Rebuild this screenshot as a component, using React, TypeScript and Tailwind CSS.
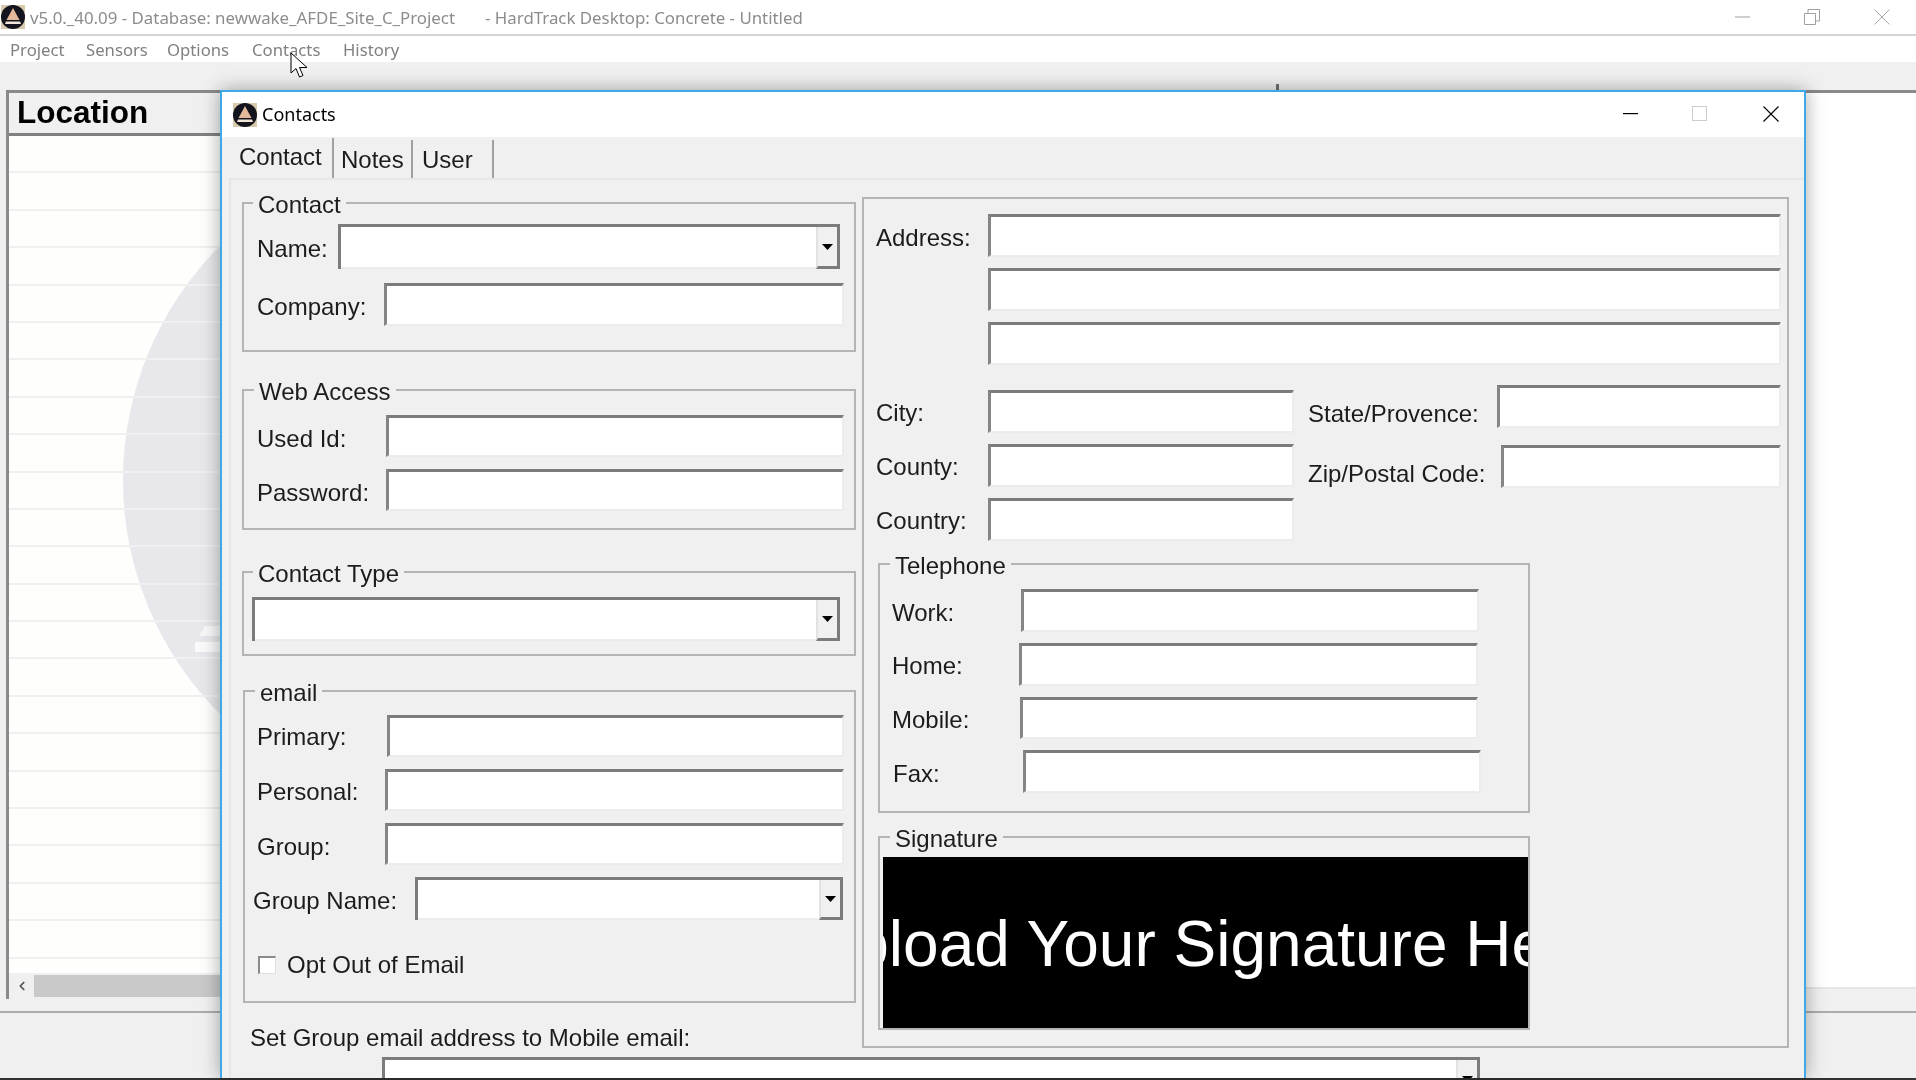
import type { ReactNode } from "react";
import { ChevronLeft } from "lucide-react";

const inputBevel =
  "bg-white border-t-[3px] border-l-[3px] border-r-[2px] border-b-[2px] border-t-[#7c7c7c] border-l-[#858585] border-r-[#ececec] border-b-[#ececec]";

// little app logo used in both title bars
function AppIcon() {
  return (
    <svg width="24" height="24" viewBox="0 0 24 24" className="shrink-0">
      <rect width="24" height="24" fill="#d9c9ad" />
      <circle cx="12" cy="12" r="12" fill="#14141f" />
      <polygon points="12,3 18.5,15 5.5,15" fill="#e3b99a" />
      <polygon points="5,16.5 19,16.5 20,19 4,19" fill="#f2e6da" />
    </svg>
  );
}

function TextBox({ className }: { className: string }) {
  return <div className={`${inputBevel} shrink-0 ${className}`} />;
}

function ComboBox({ className }: { className: string }) {
  return (
    <div className={`flex shrink-0 border-t-[3px] border-l-[3px] border-[#7c7c7c] ${className}`}>
      <div className="flex-1 bg-white border-b-2 border-[#ececec]" />
      <div className="w-[24px] flex items-center justify-center bg-[#f0f0f0] border-l-2 border-l-[#e2e2e2] border-r-[3px] border-b-[3px] border-r-[#7c7c7c] border-b-[#7c7c7c]">
        <svg width="11" height="6" viewBox="0 0 11 6">
          <polygon points="0,0 11,0 5.5,6" fill="#000" />
        </svg>
      </div>
    </div>
  );
}

function Group({
  title,
  titleClass,
  className,
  children,
}: {
  title: string;
  titleClass: string;
  className: string;
  children: ReactNode;
}) {
  return (
    <div className={`border-2 border-[#b4b4b4] ${className}`}>
      <div className={`-mt-[13px] h-[25px] w-fit bg-[#f0f0f0] px-[5px] text-[24px] leading-[28px] ${titleClass}`}>
        {title}
      </div>
      {children}
    </div>
  );
}

function Row({
  label,
  labelClass,
  className,
  children,
}: {
  label: string;
  labelClass: string;
  className: string;
  children: ReactNode;
}) {
  return (
    <div className={`flex items-center ${className}`}>
      <span className={`shrink-0 text-[24px] leading-[28px] ${labelClass}`}>{label}</span>
      {children}
    </div>
  );
}

function LeftColumn() {
  return (
    <div className="ml-[11px] w-[614px] shrink-0">
      <Group title="Contact" titleClass="ml-[9px]" className="mt-[22px] pb-[24px]">
        <Row label="Name:" labelClass="w-[81px] ml-[13px] pt-[4px]" className="mt-[8px]">
          <ComboBox className="w-[502px] h-[45px]" />
        </Row>
        <Row label="Company:" labelClass="w-[127px] ml-[13px] pt-[4px]" className="mt-[14px]">
          <TextBox className="w-[460px] h-[43px]" />
        </Row>
      </Group>

      <Group title="Web Access" titleClass="ml-[10px]" className="mt-[37px] pb-[17px]">
        <Row label="Used Id:" labelClass="w-[129px] ml-[13px] pt-[5px]" className="mt-[12px]">
          <TextBox className="w-[458px] h-[42px]" />
        </Row>
        <Row label="Password:" labelClass="w-[129px] ml-[13px] pt-[5px]" className="mt-[12px]">
          <TextBox className="w-[458px] h-[42px]" />
        </Row>
      </Group>

      <Group title="Contact Type" titleClass="ml-[9px]" className="mt-[41px] pb-[13px]">
        <ComboBox className="ml-[8px] mt-[12px] w-[588px] h-[44px]" />
      </Group>

      <Group title="email" titleClass="ml-[10px]" className="ml-[1px] mt-[34px] pb-[22px] w-[613px]">
        <Row label="Primary:" labelClass="w-[130px] ml-[12px] pt-[2px]" className="mt-[11px]">
          <TextBox className="w-[457px] h-[42px]" />
        </Row>
        <Row label="Personal:" labelClass="w-[128px] ml-[12px] pt-[4px]" className="mt-[12px]">
          <TextBox className="w-[459px] h-[42px]" />
        </Row>
        <Row label="Group:" labelClass="w-[128px] ml-[12px] pt-[5px]" className="mt-[12px]">
          <TextBox className="w-[459px] h-[42px]" />
        </Row>
        <Row label="Group Name:" labelClass="w-[162px] ml-[8px] pt-[5px]" className="mt-[12px]">
          <ComboBox className="w-[428px] h-[43px]" />
        </Row>
        <div className="ml-[13px] mt-[31px] flex items-center">
          <div className="size-[18px] bg-white border-t-2 border-l-2 border-[#8a8a8a] border-r border-b border-r-[#e0e0e0] border-b-[#e0e0e0]" />
          <span className="ml-[11px] text-[24px] leading-[28px]">Opt Out of Email</span>
        </div>
      </Group>

      <div className="ml-[8px] mt-[21px] text-[24px] leading-[28px] whitespace-nowrap">
        Set Group email address to Mobile email:
      </div>
      <ComboBox className="ml-[140px] mt-[5px] w-[1098px] h-[44px]" />
    </div>
  );
}

function RightPanel() {
  return (
    <div className="ml-[6px] mt-[17px] h-[851px] w-[927px] shrink-0 border-2 border-[#b4b4b4]">
      <Row label="Address:" labelClass="w-[112px] ml-[12px] pt-[4px]" className="mt-[15px]">
        <TextBox className="w-[793px] h-[43px]" />
      </Row>
      <TextBox className="ml-[124px] mt-[11px] w-[793px] h-[43px]" />
      <TextBox className="ml-[124px] mt-[11px] w-[793px] h-[43px]" />

      <div className="mt-[25px] flex">
        <div className="w-[430px] shrink-0">
          <Row label="City:" labelClass="w-[112px] ml-[12px] pt-[2px]" className="">
            <TextBox className="w-[306px] h-[43px]" />
          </Row>
          <Row label="County:" labelClass="w-[112px] ml-[12px] pt-[2px]" className="mt-[11px]">
            <TextBox className="w-[306px] h-[43px]" />
          </Row>
          <Row label="Country:" labelClass="w-[112px] ml-[12px] pt-[2px]" className="mt-[11px]">
            <TextBox className="w-[306px] h-[43px]" />
          </Row>
        </div>
        <div className="ml-[14px] -mt-[6px]">
          <Row label="State/Provence:" labelClass="w-[189px] pt-[16px]" className="">
            <TextBox className="w-[284px] h-[43px]" />
          </Row>
          <Row label="Zip/Postal Code:" labelClass="w-[193px] pt-[14px]" className="mt-[17px]">
            <TextBox className="w-[280px] h-[43px]" />
          </Row>
        </div>
      </div>

      <Group title="Telephone" titleClass="ml-[10px]" className="ml-[14px] mt-[22px] w-[652px] pb-[18px]">
        <Row label="Work:" labelClass="w-[129px] ml-[12px] pt-[4px]" className="mt-[12px]">
          <TextBox className="w-[458px] h-[43px]" />
        </Row>
        <Row label="Home:" labelClass="w-[127px] ml-[12px] pt-[3px]" className="mt-[11px]">
          <TextBox className="w-[459px] h-[43px]" />
        </Row>
        <Row label="Mobile:" labelClass="w-[128px] ml-[12px] pt-[4px]" className="mt-[11px]">
          <TextBox className="w-[458px] h-[42px]" />
        </Row>
        <Row label="Fax:" labelClass="w-[130px] ml-[13px] pt-[4px]" className="mt-[11px]">
          <TextBox className="w-[458px] h-[43px]" />
        </Row>
      </Group>

      <Group title="Signature" titleClass="ml-[10px]" className="ml-[14px] mt-[23px] w-[652px] pb-[0px]">
        <div className="ml-[3px] mt-[7px] flex h-[171px] w-[645px] items-center justify-center overflow-hidden bg-black">
          <span className="shrink-0 whitespace-nowrap pt-[3px] text-[64px] leading-[72px] text-white">
            Upload Your Signature Here
          </span>
        </div>
      </Group>
    </div>
  );
}

function ContactsDialog() {
  return (
    <div className="absolute left-[220px] top-[90px] flex h-[988px] w-[1586px] flex-col overflow-hidden border-x-2 border-t-2 border-[#3fa9e8] bg-[#f0f0f0] text-[#1c1c1c] shadow-[0_0_18px_rgba(0,0,0,0.35)]">
      <div className="flex h-[45px] shrink-0 items-center bg-white pl-[11px]">
        <AppIcon />
        <span className="ml-[5px] font-['Noto_Sans'] text-[18px] text-black">Contacts</span>
        <div className="ml-auto flex h-full items-center pb-[2px]">
          <svg width="15" height="15" viewBox="0 0 15 15" className="mr-[54px]">
            <rect x="0" y="7" width="15" height="1.2" fill="#000" />
          </svg>
          <div className="mr-[56px] size-[15px] border border-[#cccccc]" />
          <svg width="16" height="16" viewBox="0 0 16 16" className="mr-[25px]">
            <path d="M0.5 0.5 L15.5 15.5 M15.5 0.5 L0.5 15.5" stroke="#000" strokeWidth="1.1" fill="none" />
          </svg>
        </div>
      </div>

      <div className="flex h-[41px] shrink-0 items-end pl-[7px] text-[24px] leading-[28px]">
        <div className="flex h-[40px] w-[105px] items-center border-r-2 border-[#a0a0a0] pb-[3px] pl-[10px]">Contact</div>
        <div className="ml-[1px] flex h-[38px] w-[78px] items-center border-r-2 border-[#a0a0a0] pl-[6px] pt-[2px]">Notes</div>
        <div className="ml-[2px] flex h-[38px] w-[79px] items-center border-r-2 border-[#a0a0a0] pl-[7px] pt-[2px]">User</div>
      </div>

      <div className="ml-[7px] flex flex-1 border-l-2 border-t-2 border-[#e6e6e6]">
        <LeftColumn />
        <RightPanel />
      </div>
    </div>
  );
}

const listRows = Array.from({ length: 22 }, (_, i) => i);

export default function App() {
  return (
    <div className="relative flex h-[1080px] w-[1916px] flex-col overflow-hidden bg-[#f0f0f0] font-['Liberation_Sans',sans-serif] blur-[0.3px]">
      {/* Main window title bar */}
      <div className="flex h-[36px] shrink-0 items-center border-b-2 border-[#d4d4d4] bg-white pl-[1px] font-['Noto_Sans'] text-[16.85px] text-[#8c8c8c]">
        <AppIcon />
        <span className="ml-[5px] whitespace-pre pt-[2px]">v5.0._40.09 - Database: newwake_AFDE_Site_C_Project</span>
        <span className="ml-[30px] whitespace-pre pt-[2px]">- HardTrack Desktop: Concrete - Untitled</span>
        <div className="ml-auto flex items-center">
          <svg width="16" height="16" viewBox="0 0 16 16" className="mr-[53px]">
            <rect x="0" y="7.5" width="15" height="1" fill="#a0a0a0" />
          </svg>
          <svg width="16" height="16" viewBox="0 0 16 16" className="mr-[54px]">
            <path d="M0.5 4.5 H11.5 V15.5 H0.5 Z M4 4 V0.5 H15.5 V12 H12" stroke="#a0a0a0" strokeWidth="1" fill="none" />
          </svg>
          <svg width="16" height="16" viewBox="0 0 16 16" className="mr-[26px]">
            <path d="M0.5 0.5 L15.5 15.5 M15.5 0.5 L0.5 15.5" stroke="#a8a8a8" strokeWidth="1" fill="none" />
          </svg>
        </div>
      </div>

      {/* Menu */}
      <div className="flex h-[26px] shrink-0 items-center bg-white pl-[10px] pt-[2px] font-['Noto_Sans'] text-[16.7px] text-[#808080]">
        <span className="w-[76px]">Project</span>
        <span className="w-[81px]">Sensors</span>
        <span className="w-[85px]">Options</span>
        <span className="w-[91px]">Contacts</span>
        <span>History</span>
      </div>

      <div className="h-[28px] shrink-0" />

      {/* Location list and empty work area behind the dialog */}
      <div className="flex h-[921px] shrink-0">
        <div className="ml-[6px] flex h-[909px] w-[600px] shrink-0 flex-col overflow-hidden border-l-[3px] border-t-[3px] border-[#8a8a8a]">
          <div className="flex h-[43px] shrink-0 items-center border-b-[3px] border-[#808080] bg-[#f0f0f0] pb-[1px] pl-[8px] text-[31.5px] font-bold text-black">
            Location
          </div>
          <div className="relative flex-1 overflow-hidden bg-[#fefefc]">
            <div className="absolute left-[114px] top-[13px] size-[662px] rounded-full bg-[#e8e8ec]" />
            <svg width="40" height="30" viewBox="0 0 40 30" className="absolute left-[186px] top-[490px]">
              <polygon points="10,0 30,0 30,10 4,10" fill="#fafafa" opacity="0.9" />
              <polygon points="0,16 30,16 30,26 -4,26" fill="#fafafa" />
            </svg>
            <div className="relative">
              {listRows.map((i) => (
                <div key={i} className="h-[37.4px] border-b-2 border-[#f0f0f0]" />
              ))}
            </div>
          </div>
          <div className="mb-[2px] flex h-[24px] shrink-0 items-center border-t-2 border-[#f0f0f0] bg-[#f0f0f0]">
            <div className="flex w-[25px] items-center justify-center">
              <ChevronLeft size={14} strokeWidth={3} color="#505050" />
            </div>
            <div className="h-[22px] flex-1 bg-[#c9c9c9]" />
          </div>
        </div>
        <div className="flex-1">
          <div className="h-[899px] border-t-[3px] border-b-2 border-t-[#8a8a8a] border-b-[#e6e6e6] bg-white" />
        </div>
      </div>

      <div className="flex-1 border-t-2 border-[#acacac]" />
      <div className="h-[2px] shrink-0 bg-[#333333]" />

      {/* small tick sticking out above the dialog */}
      <div className="absolute left-[1276px] top-[84px] h-[6px] w-[3px] bg-[#707070]" />

      <ContactsDialog />

      {/* Mouse pointer */}
      <svg width="19" height="27" viewBox="0 0 19 27" className="absolute left-[290px] top-[52px]">
        <path d="M1 1 V21 L6 16.5 L9.5 25 L13 23.5 L9.5 15.5 L17 15.5 Z" fill="#fff" stroke="#000" strokeWidth="1" />
      </svg>
    </div>
  );
}
